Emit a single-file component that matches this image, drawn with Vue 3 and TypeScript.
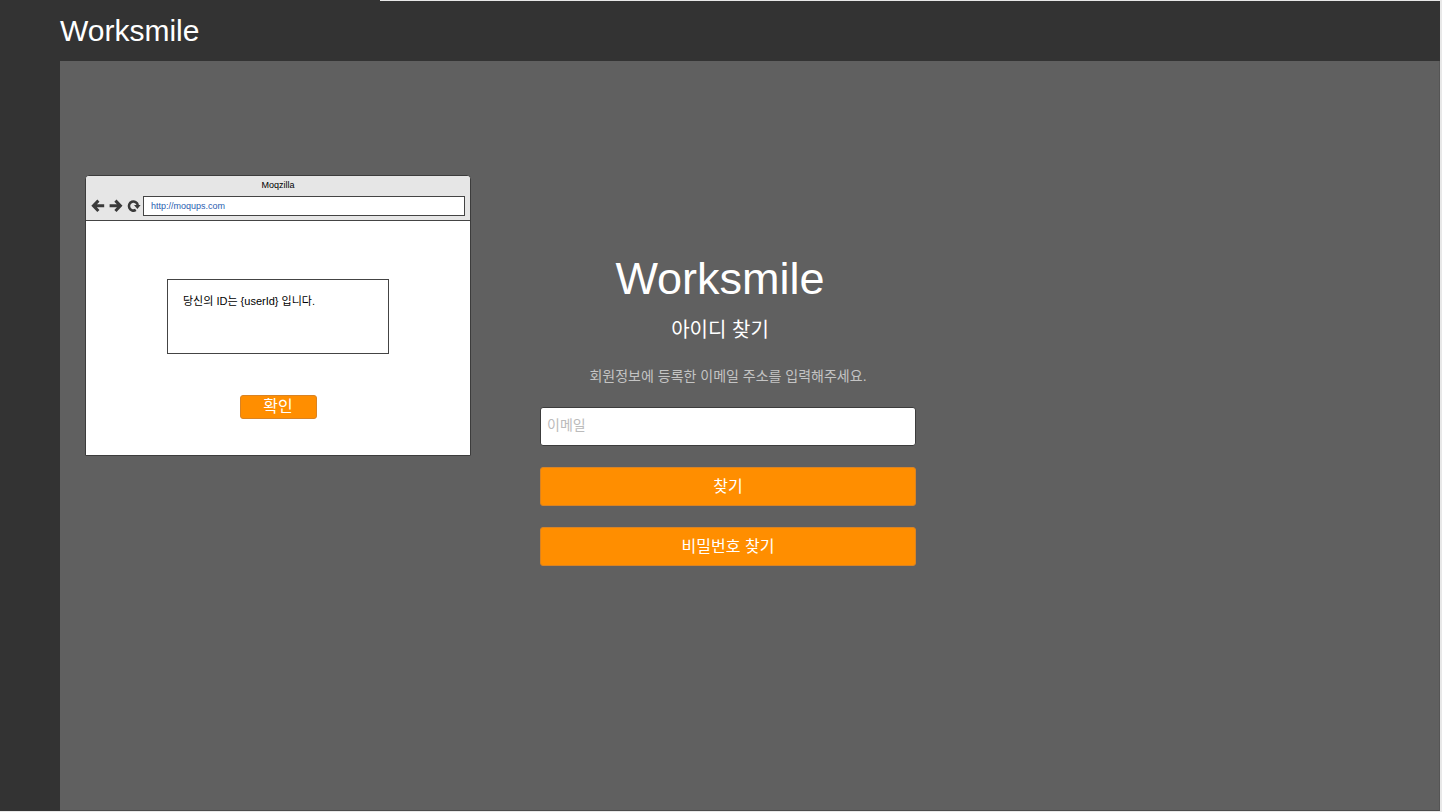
<script setup lang="ts">
import { ref } from 'vue'

const brand = 'Worksmile'
const email = ref('')
const address = ref('http://moqups.com')
const foundMessage = '당신의 ID는 {userId} 입니다.'
</script>

<template>
  <div class="page">
    <header class="topbar">
      <span class="brand">{{ brand }}</span>
    </header>
    <div class="body">
      <aside class="sidebar"></aside>
      <main class="content">
        <section class="browser" aria-label="Moqzilla">
          <div class="chrome">
            <div class="window-title">Moqzilla</div>
            <div class="toolbar">
              <button class="tool" type="button" aria-label="Back">
                <svg viewBox="0 0 14 14" width="14" height="14">
                  <path d="M7.4 1.6 2.4 6.8l5 5.2M2.8 6.8h10.4" />
                </svg>
              </button>
              <button class="tool" type="button" aria-label="Forward">
                <svg viewBox="0 0 14 14" width="14" height="14">
                  <path d="M6.4 1.6 11.4 6.8l-5 5.2M11 6.8H.6" />
                </svg>
              </button>
              <button class="tool" type="button" aria-label="Reload">
                <svg viewBox="0 0 14 14" width="14" height="14">
                  <path class="ring" d="M8.8 10.9A4.5 4.5 0 1 1 10.8 6" />
                  <path class="head" d="M7 6h6.6L10.4 10z" />
                </svg>
              </button>
              <input v-model="address" class="address" type="text" aria-label="Address" />
            </div>
          </div>
          <div class="viewport">
            <p class="message">{{ foundMessage }}</p>
            <button class="button confirm" type="button">확인</button>
          </div>
        </section>

        <form class="finder" @submit.prevent>
          <div class="heading">
            <h1>{{ brand }}</h1>
            <h2>아이디 찾기</h2>
          </div>
          <label class="hint" for="email">회원정보에 등록한 이메일 주소를 입력해주세요.</label>
          <input id="email" v-model="email" class="email" type="email" placeholder="이메일" />
          <button class="button" type="submit">찾기</button>
          <button class="button" type="button">비밀번호 찾기</button>
        </form>
      </main>
    </div>
  </div>
</template>

<style>
body {
  margin: 0;
  background: #e8e8e8;
}
</style>

<style scoped>
* {
  box-sizing: border-box;
}

.page {
  display: flex;
  flex-direction: column;
  min-height: 100vh;
  padding: 0 2px 1px 0;
  font-family: "Liberation Sans", "Noto Sans CJK KR", sans-serif;
  color: #fff;
}

.topbar {
  display: flex;
  align-items: center;
  height: 61px;
  padding-left: 60px;
  background: linear-gradient(#333, #333) 0 0 / 380px 1px no-repeat,
    linear-gradient(#333, #333) 0 1px / 100% 60px no-repeat;
}

.brand {
  font-size: 30px;
  line-height: 34px;
}

.body {
  display: flex;
  flex: 1;
}

.sidebar {
  flex: 0 0 60px;
  background: #333;
}

.content {
  display: flex;
  flex: 1;
  align-items: flex-start;
  gap: 69px;
  padding: 114px 25px 24px;
  background: #606060;
  border-right: 1px solid #555;
  border-bottom: 1px solid #4c4c4c;
}

.browser {
  flex: 0 0 386px;
  border: 1px solid #3c3c3c;
  border-radius: 4px 4px 0 0;
  background: #fff;
  overflow: hidden;
}

.chrome {
  padding: 2px 5px 4px;
  background: #e6e6e6;
  border-bottom: 1px solid #444;
}

.window-title {
  font-size: 9px;
  line-height: 14px;
  text-align: center;
  color: #000;
  margin-bottom: 4px;
}

.toolbar {
  display: flex;
  align-items: center;
  gap: 4px;
}

.tool {
  display: flex;
  padding: 0;
  border: 0;
  background: none;
}

.tool path {
  fill: none;
  stroke: #3a3a3a;
  stroke-width: 3;
}

.tool .ring {
  stroke-width: 2.6;
}

.tool .head {
  fill: #3a3a3a;
  stroke: none;
}

.tool:last-of-type {
  margin-right: -2px;
}

.address {
  flex: 1;
  min-width: 0;
  height: 20px;
  padding: 0 7px;
  border: 1px solid #444;
  background: #fff;
  font: 9px "Liberation Sans", sans-serif;
  color: #2a5db0;
}

.viewport {
  display: flex;
  flex-direction: column;
  align-items: center;
  padding: 58px 24px 36px;
}

.message {
  width: 222px;
  height: 75px;
  margin: 0 0 41px;
  padding: 13px 15px;
  border: 1px solid #444;
  font-size: 11px;
  line-height: 16px;
  color: #000;
}

.finder {
  display: flex;
  flex-direction: column;
  flex: 0 0 376px;
  padding-top: 78px;
}

.heading {
  width: 360px;
  text-align: center;
}

h1,
h2 {
  margin: 0;
  font-weight: 400;
}

h1 {
  font-size: 45px;
  line-height: 52px;
}

h2 {
  margin-top: 11px;
  font-size: 20px;
  line-height: 28px;
}

.hint {
  margin: 22px 0 21px;
  font-size: 14px;
  line-height: 20px;
  text-align: center;
  color: #c4c4c4;
}

.email {
  height: 39px;
  padding: 0 6px 4px;
  border: 1px solid #3c3c3c;
  border-radius: 3px;
  background: #fff;
  font: 14px "Liberation Sans", "Noto Sans CJK KR", sans-serif;
  color: #333;
}

.email::placeholder {
  color: #bbb;
  opacity: 1;
}

.button {
  height: 39px;
  margin-top: 21px;
  padding: 0;
  border: 1px solid #d98324;
  border-radius: 3px;
  background: #ff8e00;
  font: 16px "Liberation Sans", "Noto Sans CJK KR", sans-serif;
  line-height: 22px;
  color: #fff;
}

.confirm {
  width: 77px;
  height: 24px;
  margin: 0;
}
</style>
